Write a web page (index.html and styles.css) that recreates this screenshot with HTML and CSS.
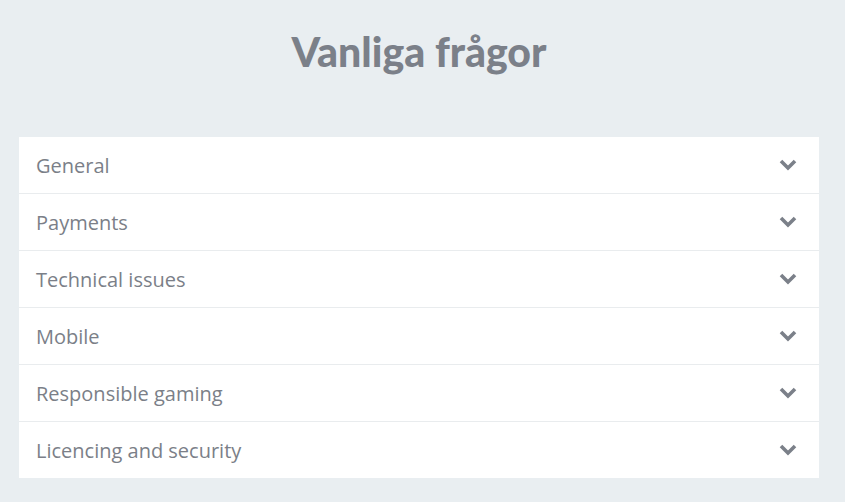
FILE: index.html
```html
<!DOCTYPE html>
<html lang="sv">
<head>
    <meta charset="UTF-8">
    <meta name="viewport" content="width=device-width, initial-scale=1.0">
    <title>Vanliga frågor</title>
    <link rel="stylesheet" href="styles.css">
</head>
<body>
    <div class="faq">
        <h1 class="faq-title">Vanliga frågor</h1>
        <ul class="faq-list">
            <li class="faq-item"><span>General</span><svg class="chevron" viewBox="0 0 20 14"><path d="M3 3l7 7 7-7"/></svg></li>
            <li class="faq-item"><span>Payments</span><svg class="chevron" viewBox="0 0 20 14"><path d="M3 3l7 7 7-7"/></svg></li>
            <li class="faq-item"><span>Technical issues</span><svg class="chevron" viewBox="0 0 20 14"><path d="M3 3l7 7 7-7"/></svg></li>
            <li class="faq-item"><span>Mobile</span><svg class="chevron" viewBox="0 0 20 14"><path d="M3 3l7 7 7-7"/></svg></li>
            <li class="faq-item"><span>Responsible gaming</span><svg class="chevron" viewBox="0 0 20 14"><path d="M3 3l7 7 7-7"/></svg></li>
            <li class="faq-item"><span>Licencing and security</span><svg class="chevron" viewBox="0 0 20 14"><path d="M3 3l7 7 7-7"/></svg></li>
        </ul>
    </div>
</body>
</html>
```

FILE: styles.css
```css
* {
    box-sizing: border-box;
}

body {
    margin: 0;
    background-color: #e9eef1;
    font-family: "Open Sans", "Liberation Sans", sans-serif;
}

.faq {
    width: 800px;
    margin: 0 0 0 19px;
    padding-top: 27px;
}

.faq-title {
    margin: 0 0 61px;
    text-align: center;
    font-family: "Lato", "DejaVu Sans", sans-serif;
    font-weight: 900;
    font-size: 41px;
    line-height: 49px;
    color: #7b8089;
}

.faq-list {
    list-style: none;
    margin: 0;
    padding: 0;
    background-color: #fff;
}

.faq-item {
    display: flex;
    align-items: center;
    justify-content: space-between;
    height: 57px;
    padding: 0 21px 0 17px;
    border-bottom: 1px solid #e9ecee;
    font-size: 20px;
    color: #7b7f88;
}

.faq-item:last-child {
    height: 56px;
    border-bottom: none;
}

.chevron {
    width: 20px;
    height: 14px;
    fill: none;
    stroke: #7b8089;
    stroke-width: 3.6;
}
```
